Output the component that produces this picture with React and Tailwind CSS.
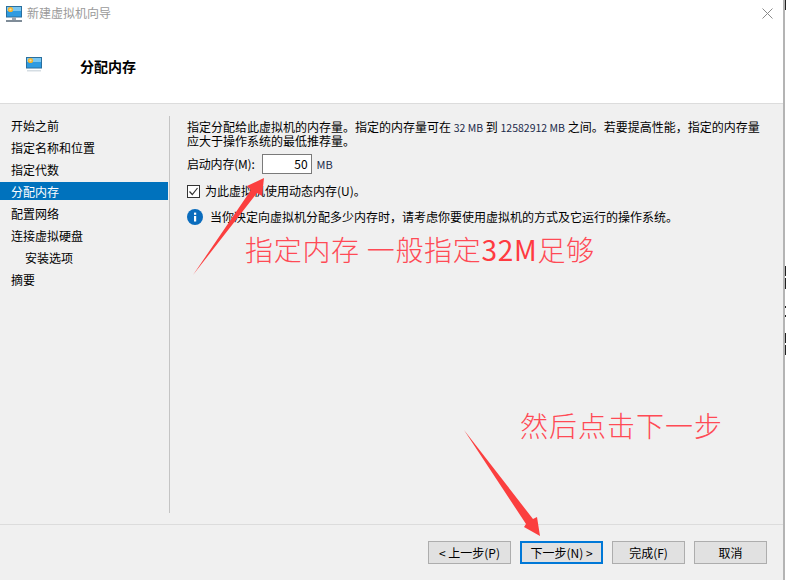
import React from "react";

const cjk = "font-['Segoe_UI','Noto_Sans_CJK_SC',sans-serif]";

const steps = [
  { label: "开始之前" },
  { label: "指定名称和位置" },
  { label: "指定代数" },
  { label: "分配内存", active: true },
  { label: "配置网络" },
  { label: "连接虚拟硬盘" },
  { label: "安装选项", sub: true },
  { label: "摘要" },
];

// small monitor icon from the title bar and the header
const MonitorIcon = ({ stand }) => (
  <svg width="16" height="16" viewBox="0 0 16 16">
    <rect x="0.5" y="0.5" width="15" height="10.5" fill="#2f9be0" stroke="#2a6f9e" />
    <rect x="1" y="1" width="14" height="4" fill="#7cc7f0" />
    <circle cx="4.5" cy="3.5" r="2.6" fill="#f6b52d" />
    <circle cx="4.5" cy="3.5" r="1.1" fill="#fbe29a" />
    {stand ? (
      <>
        <rect x="6" y="11" width="4" height="3" fill="#9aa7b2" />
        <rect x="0" y="14" width="16" height="2" fill="#7f8c98" />
      </>
    ) : (
      <rect x="1" y="13" width="14" height="1.5" fill="#d5dde3" />
    )}
  </svg>
);

const FooterButton = ({ children, primary, width }) => (
  <button
    className={`h-[23px] flex items-center justify-center text-xs text-black bg-[#e1e1e1] ${width} ${
      primary ? "border-2 border-[#0078d7]" : "border border-[#adadad]"
    }`}
  >
    {children}
  </button>
);

export default function App() {
  return (
    <div className={`relative w-[786px] h-[580px] flex bg-white overflow-hidden ${cjk}`}>
      <div className="w-[785px] h-full flex flex-col border-r-2 border-[#b4b4b4]">
        {/* title bar */}
        <div className="h-[27px] bg-white flex items-center pl-[6px] pr-[10px] shrink-0">
          <MonitorIcon stand />
          <span className="ml-[5px] mt-[-1px] text-xs text-[#9a9a9a]">新建虚拟机向导</span>
          <svg className="ml-auto mt-[-1px]" width="11" height="11" viewBox="0 0 11 11" stroke="#8a8a8a" fill="none">
            <path d="M0.5 0.5l10 10M10.5 0.5l-10 10" />
          </svg>
        </div>

        {/* header */}
        <div className="h-[77px] bg-white border-b border-[#dcdcdc] flex items-center pl-[26px] shrink-0">
          <MonitorIcon />
          <span className="ml-[38px] mt-[2px] text-sm font-bold text-black">分配内存</span>
        </div>

        {/* body */}
        <div className="flex-1 flex bg-[#f0f0f0] pt-3 min-h-0">
          <div className="w-[170px] h-[397px] border-r border-[#c4c4c4] shrink-0 flex flex-col gap-1">
            {steps.map((s) => (
              <div
                key={s.label}
                className={`h-[18px] mr-px pt-px flex items-center text-xs leading-[18px] ${
                  s.sub ? "pl-[25px]" : "pl-[11px]"
                } ${s.active ? "bg-[#0072bd] text-white" : "text-black"}`}
              >
                {s.label}
              </div>
            ))}
          </div>

          <div className="flex-1 pl-[17px] pt-[4px] text-xs text-black">
            <p className="leading-[13px] w-[580px]">
              指定分配给此虚拟机的内存量。指定的内存量可在 <span className="text-[10.5px] text-[#1b2a4a]">32 MB</span> 到{" "}
              <span className="text-[10.5px] text-[#1b2a4a]">12582912 MB</span> 之间。若要提高性能，指定的内存量应大于操作系统的最低推荐量。
            </p>

            <div className="flex items-center mt-[7px] h-5">
              <span className="tracking-[-0.2px]">启动内存(M):</span>
              <div className="ml-[7px] w-[50px] h-5 bg-white border border-[#7a7a7a] flex items-center justify-end pr-[3px]">
                50
              </div>
              <span className="ml-[5px] text-[11px] text-[#1b2a4a]">MB</span>
            </div>

            <div className="flex items-center mt-[10px] h-[14px]">
              <div className="w-[13px] h-[13px] bg-white border border-[#333] flex items-center justify-center">
                <svg width="11" height="11" viewBox="0 0 11 11" fill="none" stroke="#333" strokeWidth="1.2">
                  <path d="M1.5 5.5l2.8 3L9.5 2" />
                </svg>
              </div>
              <span className="ml-[5px]">为此虚拟机使用动态内存(U)。</span>
            </div>

            <div className="flex items-center mt-[11px]">
              <svg width="16" height="16" viewBox="0 0 16 16">
                <circle cx="8" cy="8" r="8" fill="#0a6cbd" />
                <rect x="7" y="7" width="2.2" height="5.5" fill="#fff" />
                <rect x="7" y="3.6" width="2.2" height="2.2" fill="#fff" />
              </svg>
              <span className="ml-[7px]">当你决定向虚拟机分配多少内存时，请考虑你要使用虚拟机的方式及它运行的操作系统。</span>
            </div>
          </div>
        </div>

        {/* footer */}
        <div className="h-[56px] shrink-0 bg-[#f0f0f0] border-t border-[#dcdcdc] flex items-start justify-end gap-[9px] pt-4 pr-4">
          <FooterButton width="w-[83px]">&lt; 上一步(P)</FooterButton>
          <FooterButton primary width="w-[83px]">下一步(N) &gt;</FooterButton>
          <FooterButton width="w-[73px]">完成(F)</FooterButton>
          <FooterButton width="w-[73px]">取消</FooterButton>
        </div>
      </div>

      {/* annotations drawn on top of the screenshot */}
      <div className="absolute left-[245px] top-[231px] text-[28px] leading-[36px] font-light text-[#ff4a55] whitespace-pre tracking-[0.7px]">
        指定内存 一般指定<span className="font-normal text-[#ff3a40]">32M</span>足够
      </div>
      <div className="absolute left-[520px] top-[407px] text-[28px] leading-[36px] font-light text-[#ff4a55] whitespace-pre tracking-[1px]">
        然后点击下一步
      </div>
      <svg className="absolute left-0 top-0 pointer-events-none" width="786" height="580" viewBox="0 0 786 580">
        <path d="M193 275L251 190L247 186L264 178L262 196L257 193Z" fill="#fb3f3f" />
        <path d="M464 430L526 524L524 527L540 536L537 517L533 519Z" fill="#fb3f3f" />
        {/* bits of the desktop showing past the window edge */}
        <path d="M785 0h1v10h-1zM785 266h1v10h-1zM785 278h1v11h-1zM785 306h1v2h-1zM785 315h1v2h-1zM785 333h1v10h-1zM785 345h1v10h-1z" fill="#222" />
      </svg>
    </div>
  );
}
